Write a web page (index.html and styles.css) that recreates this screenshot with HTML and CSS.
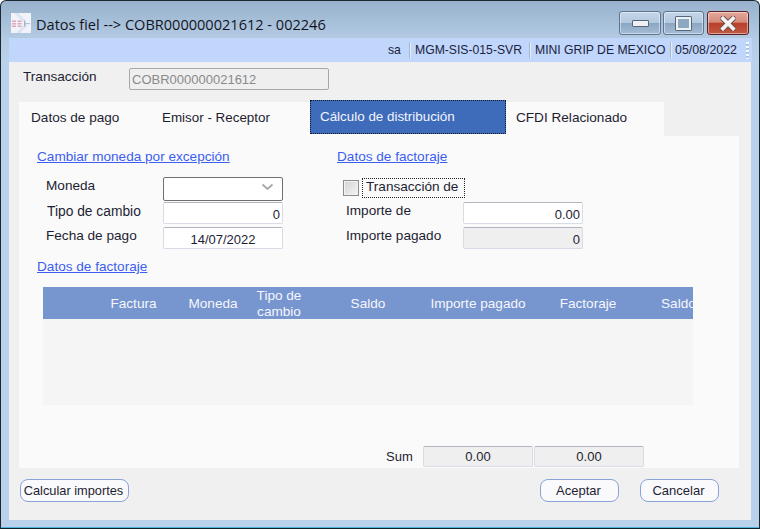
FILE: index.html
```html
<!DOCTYPE html>
<html lang="es">
<head>
<meta charset="utf-8">
<title>Datos fiel</title>
<link rel="stylesheet" href="styles.css">
</head>
<body>
<div class="window">
  <header class="titlebar">
    <svg class="app-icon" width="20" height="20" viewBox="0 0 20 20">
      <rect width="20" height="20" fill="#f2f3f9"/>
      <path d="M5 0 L13 8 M7 20 L15 12" stroke="#dbe5f1" stroke-width="3"/>
      <path d="M1 7.5h4v1.5h-4zM1 10h4v1.5h-4zM1 12.5h4v1.5h-4zM6.500 7.500h4v1.500h-4zM6.500 10h4v1.500h-4zM6.500 12.500h4v1.500h-4z" fill="#dfa6bd"/>
      <rect x="13" y="7.500" width="1.300" height="6" fill="#9fb1ca"/>
      <rect x="14" y="10" width="5" height="1.200" fill="#b4c2d6"/>
    </svg>
    <span class="title-text">Datos fiel --&gt; COBR000000021612 - 002246</span>
    <div class="caption-buttons">
      <button class="cap cap-min" aria-label="Minimizar"><span class="glyph-min"></span></button>
      <button class="cap cap-max" aria-label="Maximizar"><span class="glyph-max"></span></button>
      <button class="cap cap-close" aria-label="Cerrar">
        <svg width="18" height="15" viewBox="0 0 18 15">
          <path d="M4 2.5 L14 12.5 M14 2.5 L4 12.5" stroke="#6c4a48" stroke-width="5.5" stroke-linecap="round"/>
          <path d="M4 2.5 L14 12.5 M14 2.5 L4 12.5" stroke="#f3f3f3" stroke-width="3.8" stroke-linecap="square"/>
        </svg>
      </button>
    </div>
  </header>
  <div class="client">
    <div class="statusbar">
      <span class="st st-sa">sa</span>
      <span class="st st-server">MGM-SIS-015-SVR</span>
      <span class="st st-company">MINI GRIP DE MEXICO</span>
      <span class="st st-date">05/08/2022</span>
      <span class="grip"></span>
    </div>
    <div class="content">
      <div class="trans-row">
        <label class="trans-label">Transacción</label>
        <div class="field-trans">COBR000000021612</div>
      </div>
      <nav class="tabs">
        <span class="tab tab-1">Datos de pago</span>
        <span class="tab tab-2">Emisor - Receptor</span>
        <span class="tab tab-3">Cálculo de distribución</span>
        <span class="tab tab-4">CFDI Relacionado</span>
      </nav>
      <section class="panel">
        <div class="columns">
          <div class="col col-left">
            <a class="link">Cambiar moneda por excepción</a>
            <div class="form-grid">
              <label class="lbl lbl-moneda">Moneda</label>
              <div class="select">
                <svg width="13" height="8" viewBox="0 0 13 8"><path d="M1.5 1.5 L6.5 6 L11.5 1.5" fill="none" stroke="#a9a9a9" stroke-width="2"/></svg>
              </div>
              <label class="lbl lbl-tipo">Tipo de cambio</label>
              <div class="field num">0</div>
              <label class="lbl">Fecha de pago</label>
              <div class="field center">14/07/2022</div>
            </div>
          </div>
          <div class="col col-right">
            <a class="link">Datos de factoraje</a>
            <div class="check-row">
              <span class="checkbox"></span>
              <span class="check-label">Transacción de</span>
            </div>
            <div class="form-grid form-right">
              <label class="lbl">Importe de</label>
              <div class="field num">0.00</div>
              <label class="lbl">Importe pagado</label>
              <div class="field num disabled">0</div>
            </div>
          </div>
        </div>
        <a class="link link-second">Datos de factoraje</a>
        <div class="table">
          <div class="thead">
            <span></span>
            <span>Factura</span>
            <span>Moneda</span>
            <span class="wrap">Tipo de cambio</span>
            <span>Saldo</span>
            <span>Importe pagado</span>
            <span>Factoraje</span>
            <span class="last">Saldo</span>
          </div>
        </div>
        <div class="sum-row">
          <span class="sum-label">Sum</span>
          <div class="field center disabled sum-field">0.00</div>
          <div class="field center disabled sum-field">0.00</div>
        </div>
      </section>
      <footer class="actions">
        <button class="btn btn-calc">Calcular importes</button>
        <button class="btn btn-ok">Aceptar</button>
        <button class="btn btn-cancel">Cancelar</button>
      </footer>
    </div>
  </div>
</div>
</body>
</html>
```

FILE: styles.css
```css
* { box-sizing: border-box; }
html, body {
  margin: 0;
  padding: 0;
  width: 760px;
  height: 529px;
  overflow: hidden;
  background: #fff;
  font-family: "Liberation Sans", Arial, sans-serif;
  font-size: 13px;
  color: #1e1e32;
}
.window {
  width: 760px;
  height: 529px;
  border: 1px solid #1d2730;
  border-bottom-color: #10202a;
  border-radius: 6px 6px 0 0;
  background: linear-gradient(to bottom, #98b2cd 0, #b3cbe3 38px, #b9d1ea 60px, #b9d1ea 100%);
  padding: 0 8px 8px;
  box-shadow: inset 0 -1px 0 #4fb4dc;
  display: flex;
  flex-direction: column;
}
.titlebar {
  height: 37px;
  flex: none;
  display: flex;
  align-items: flex-start;
}
.app-icon { margin: 12px 0 0 2px; flex: none; }
.title-text {
  margin: 14px 0 0 5px;
  font-family: "Open Sans", "Liberation Sans", sans-serif;
  font-size: 14.55px;
  line-height: 19px;
  color: #14141e;
}
.caption-buttons {
  margin: 10px 0 0 auto;
  display: flex;
  gap: 2px;
  padding-right: 2px;
}
.cap {
  width: 42px;
  height: 24px;
  padding: 0;
  border: 1px solid #5c7590;
  border-radius: 3px;
  background: linear-gradient(to bottom, #c5d6e8 0, #b3c8de 48%, #8ca7c4 52%, #a5bcd4 100%);
  box-shadow: inset 0 0 0 1px rgba(255,255,255,.45);
  display: flex;
  align-items: center;
  justify-content: center;
}
.cap-max { width: 41px; }
.cap-close {
  margin-left: 1px;
  border-color: #5e2028;
  background: linear-gradient(to bottom, #e3a99c 0, #d58a7a 46%, #b9402a 52%, #c05a44 100%);
}
.glyph-min {
  display: block;
  width: 17px;
  height: 7px;
  margin-top: 1px;
  background: #eef1f4;
  border: 1px solid #55677a;
  border-radius: 1px;
}
.glyph-max {
  display: block;
  width: 17px;
  height: 15px;
  background: #8fa8c2;
  border: 3px solid #eef1f4;
  outline: 1px solid #55677a;
  outline-offset: -1px;
  border-radius: 1px;
}
.client {
  flex: 1;
  display: flex;
  flex-direction: column;
  min-height: 0;
}
.statusbar {
  height: 24px;
  flex: none;
  background: #c0d6fa;
  display: flex;
  align-items: center;
  margin-right: -1px;
  line-height: 16px;
  font-size: 12.2px;
  color: #1c2340;
  white-space: nowrap;
}
.st {
  height: 16px;
  border-right: 1px solid #a8b8cc;
  box-shadow: 1px 0 0 #e4edfb;
  flex: none;
}
.st-sa { margin-left: 379px; width: 22px; }
.st-server { width: 120px; padding-left: 5px; }
.st-company { width: 141px; padding-left: 5px; }
.st-date { width: 75px; padding-left: 4px; border: 0; box-shadow: none; font-size: 12.4px; }
.grip {
  width: 3px;
  height: 17px;
  background: repeating-linear-gradient(to bottom, #f4f8ff 0, #f4f8ff 2px, #a6b8d0 2px, #c0d6fa 4px);
}
.content {
  flex: 1;
  background: #f0f0f0;
  min-height: 0;
}
.trans-row {
  height: 40px;
  display: flex;
  align-items: flex-start;
  padding: 6px 0 0 14px;
}
.trans-label { line-height: 16px; width: 106px; flex: none; font-size: 13.6px; padding-top: 1px; }
.field-trans {
  width: 200px;
  height: 22px;
  background: #efefef;
  border: 1px solid #a8a8a8;
  border-radius: 2px;
  color: #8a8a8a;
  padding: 0 2px;
  line-height: 21px;
}
.tabs {
  margin-left: 10px;
  width: 645px;
  height: 34px;
  background: #fafafa;
  display: flex;
  align-items: stretch;
}
.tab { line-height: 31px; display: block; font-size: 13.6px; }
.tab-1 { width: 131px; padding-left: 12px; }
.tab-2 { width: 160px; padding-left: 12px; font-size: 13.4px; }
.tab-3 {
  width: 196px;
  margin-top: -2px;
  height: 34px;
  padding-left: 10px;
  line-height: 33px;
  font-size: 13.4px;
  background: #3f6bbb;
  color: #f2f5fb;
  outline: 1px dotted #10182e;
  outline-offset: -1px;
}
.tab-4 { padding-left: 10px; flex: 1; }
.panel {
  margin-left: 10px;
  width: 720px;
  height: 332px;
  background: #fafafa;
  padding: 13px 0 0 18px;
}
.columns { display: flex; height: 101px; }
.col { display: flex; flex-direction: column; }
.col-left { width: 300px; }
.link {
  display: block;
  color: #3c5ef0;
  text-decoration: underline;
  line-height: 16px;
  width: max-content;
  font-size: 13.6px;
}
.form-grid {
  display: grid;
  grid-template-columns: 117px 120px;
  grid-auto-rows: 22px;
  row-gap: 3px;
  margin: 12px 0 0 9px;
}
.form-grid .select { height: 24px; margin-bottom: -2px; }
.form-grid .select + .lbl { margin-top: 1px; }
.lbl { line-height: 16px; padding-top: 1px; font-size: 13.6px; white-space: nowrap; }
.lbl-tipo { margin-left: 1px; font-size: 13.8px; }
.select {
  background: #fff;
  border: 1px solid #6f6f6f;
  border-radius: 2px;
  display: flex;
  justify-content: flex-end;
  padding: 5px 8px 0 0;
}
.field {
  background: #fff;
  border: 1px solid #d8dce6;
  border-top-color: #b4b4be;
  border-radius: 2px;
  line-height: 23px;
}
.num { text-align: right; padding-right: 2px; }
.center { text-align: center; }
.disabled { background: #efefef; }
.check-row {
  display: flex;
  align-items: center;
  gap: 3px;
  height: 20px;
  margin: 13px 0 0 6px;
}
.checkbox {
  width: 16px;
  height: 16px;
  border: 1px solid #8c8c8c;
  background: linear-gradient(135deg, #d4d4d4, #f4f4f4);
  box-shadow: inset 0 0 0 1px #f2f2f2;
}
.check-label {
  width: 103px;
  height: 20px;
  line-height: 18px;
  padding-left: 4px;
  font-size: 13.6px;
  white-space: nowrap;
  outline: 1px dotted #222;
  outline-offset: -1px;
}
.form-right { margin: 4px 0 0 9px; }
.link-second { margin-top: 9px; }
.table {
  margin: 12px 0 0 6px;
  width: 650px;
  height: 118px;
  background: #f5f5f5;
  overflow: hidden;
}
.thead {
  height: 32px;
  background: #7795cf;
  color: #f6f7fc;
  display: grid;
  grid-template-columns: 46px 89px 70px 62px 116px 104px 116px 80px;
  align-items: center;
  text-align: center;
  line-height: 16px;
  font-size: 13.6px;
  white-space: nowrap;
}
.thead .wrap { white-space: normal; padding-top: 1px; }
.thead .last { text-align: left; padding-left: 15px; }
.sum-row {
  margin-top: 41px;
  display: flex;
  align-items: center;
  gap: 1px;
  padding-left: 349px;
  height: 21px;
}
.sum-label { width: 36px; }
.sum-field { width: 110px; height: 21px; line-height: 20px; }
.actions {
  display: flex;
  padding: 11px 0 0 11px;
}
.btn {
  height: 23px;
  padding: 0 2px 0 0;
  font: inherit;
  color: #1e1e32;
  line-height: 18px;
  background: #fafafc;
  border: 1px solid #8aa2d8;
  border-radius: 8px;
}
.btn-calc { width: 109px; font-size: 12.8px; }
.btn-ok { width: 79px; margin-left: 411px; }
.btn-cancel { width: 79px; margin-left: 21px; }
```
